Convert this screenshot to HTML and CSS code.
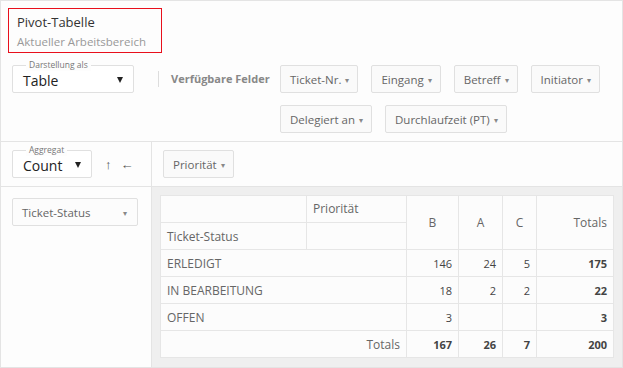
FILE: index.html
```html
<!DOCTYPE html>
<html lang="de">
<head>
    <meta charset="UTF-8">
    <title>Pivot-Tabelle</title>
    <link rel="stylesheet" href="styles.css">
</head>
<body>
    <div class="pivot">
        <div class="head">
            <div class="title-box">
                <div class="title">Pivot-Tabelle</div>
                <div class="subtitle">Aktueller Arbeitsbereich</div>
            </div>
        </div>

        <div class="toolbar">
            <div class="select select-view">
                <span class="select-label">Darstellung als</span>
                <span class="select-value">Table</span>
                <span class="caret-solid"></span>
            </div>
            <span class="sep"></span>
            <span class="fields-label">Verfügbare Felder</span>
            <div class="fields">
                <button class="field">Ticket-Nr. <span class="caret">▾</span></button>
                <button class="field">Eingang <span class="caret">▾</span></button>
                <button class="field">Betreff <span class="caret">▾</span></button>
                <button class="field">Initiator <span class="caret">▾</span></button>
                <button class="field">Delegiert an <span class="caret">▾</span></button>
                <button class="field">Durchlaufzeit (PT) <span class="caret">▾</span></button>
            </div>
        </div>

        <div class="config-row">
            <div class="left-cell agg-cell">
                <div class="select select-agg">
                    <span class="select-label">Aggregat</span>
                    <span class="select-value">Count</span>
                    <span class="caret-solid"></span>
                </div>
                <span class="arrow">↑</span>
                <span class="arrow">←</span>
            </div>
            <div class="right-cell">
                <button class="field">Priorität <span class="caret">▾</span></button>
            </div>
        </div>

        <div class="body-row">
            <div class="left-cell rows-cell">
                <button class="field row-field">Ticket-Status <span class="caret">▾</span></button>
            </div>
            <div class="table-area">
                <table class="pvt">
                    <colgroup>
                        <col style="width:146px">
                        <col style="width:100px">
                        <col style="width:52px">
                        <col style="width:44px">
                        <col style="width:34px">
                        <col style="width:77px">
                    </colgroup>
                    <thead>
                        <tr>
                            <th></th>
                            <th class="axis">Priorität</th>
                            <th rowspan="2" class="col-key">B</th>
                            <th rowspan="2" class="col-key">A</th>
                            <th rowspan="2" class="col-key">C</th>
                            <th rowspan="2" class="num">Totals</th>
                        </tr>
                        <tr>
                            <th class="row-axis">Ticket-Status</th>
                            <th></th>
                        </tr>
                    </thead>
                    <tbody>
                        <tr>
                            <td colspan="2">ERLEDIGT</td>
                            <td class="num">146</td>
                            <td class="num">24</td>
                            <td class="num">5</td>
                            <td class="num total">175</td>
                        </tr>
                        <tr>
                            <td colspan="2">IN BEARBEITUNG</td>
                            <td class="num">18</td>
                            <td class="num">2</td>
                            <td class="num">2</td>
                            <td class="num total">22</td>
                        </tr>
                        <tr>
                            <td colspan="2">OFFEN</td>
                            <td class="num">3</td>
                            <td class="num"></td>
                            <td class="num"></td>
                            <td class="num total">3</td>
                        </tr>
                        <tr>
                            <td colspan="2" class="num">Totals</td>
                            <td class="num total">167</td>
                            <td class="num total">26</td>
                            <td class="num total">7</td>
                            <td class="num total">200</td>
                        </tr>
                    </tbody>
                </table>
            </div>
        </div>
    </div>
</body>
</html>
```

FILE: styles.css
```css
body { margin: 0; font-family: "Open Sans", Arial, sans-serif; background: #fff; }

.pivot {
    width: 623px;
    height: 368px;
    box-sizing: border-box;
    border: 1px solid #e4e4e4;
    background: #fdfdfd;
    display: flex;
    flex-direction: column;
}

.head { padding: 7px 0 0 7px; }
.title-box {
    display: inline-block;
    width: 154px;
    height: 45px;
    box-sizing: border-box;
    border: 1px solid #e8101c;
    padding: 4px 0 0 8px;
}
.title { font-size: 13px; color: #333; line-height: 18px; }
.subtitle { font-size: 11.5px; color: #999; line-height: 18px; margin-top: 2px; }

.toolbar {
    display: flex;
    align-items: flex-start;
    padding: 12px 0 8px 11px;
    border-bottom: 1px solid #e4e4e4;
}

.select {
    position: relative;
    height: 28px;
    box-sizing: border-box;
    border: 1px solid #e0e0e0;
    border-radius: 2px;
    background: #fff;
    display: flex;
    align-items: center;
    padding: 0 10px;
}
.select-view { width: 122px; }
.select-agg { width: 80px; }
.select-label {
    position: absolute;
    top: -7px;
    left: 13px;
    padding: 0 3px;
    background: #fdfdfd;
    font-size: 8.5px;
    line-height: 12px;
    color: #777;
}
.select-value { font-size: 14px; color: #222; flex: 1; padding-top: 3px; }
.caret-solid {
    width: 0;
    height: 0;
    border-left: 3px solid transparent;
    border-right: 3px solid transparent;
    border-top: 6px solid #222;
    margin-top: 2px;
}

.sep {
    width: 1px;
    height: 16px;
    background: #ddd;
    margin: 6px 12px 0 24px;
}
.fields-label {
    width: 109px;
    line-height: 28px;
    font-size: 11px;
    font-weight: bold;
    color: #888;
}
.fields {
    width: 335px;
    display: flex;
    flex-wrap: wrap;
    gap: 12px 13px;
}

.field {
    height: 28px;
    box-sizing: border-box;
    border: 1px solid #e0e0e0;
    border-radius: 2px;
    background: #fafafa;
    padding: 0 8px 0 9px;
    font-family: "Open Sans", Arial, sans-serif;
    font-size: 11.5px;
    color: #666;
    display: inline-flex;
    align-items: center;
}
.caret { font-size: 8px; color: #888; margin-left: 4px; }

.config-row, .body-row {
    display: grid;
    grid-template-columns: 151px 1fr;
}
.config-row { border-bottom: 1px solid #e4e4e4; }
.body-row { flex: 1; }
.left-cell { border-right: 1px solid #e4e4e4; box-sizing: border-box; }
.agg-cell { padding: 8px 0 8px 11px; display: flex; align-items: center; }
.arrow { font-size: 13px; color: #555; margin-left: 13px; }
.arrow + .arrow { margin-left: 9px; }
.right-cell { padding: 8px 11px; }

.rows-cell { padding: 11px 0 0 11px; }
.row-field { width: 126px; justify-content: space-between; padding-left: 9px; padding-right: 10px; background: #fcfcfc; }

.table-area { background: #efefef; padding: 8px; }
.pvt {
    table-layout: fixed;
    width: 453px;
    border-collapse: collapse;
    background: #fcfcfc;
    font-size: 12px;
    color: #666;
}
.pvt th, .pvt td {
    border: 1px solid #e6e6e6;
    height: 26px;
    padding: 0 6px;
    font-weight: normal;
    text-align: left;
    white-space: nowrap;
}
.pvt th.axis { vertical-align: top; padding-top: 4px; height: 22px; }
.pvt th.col-key { text-align: center; }
.pvt .num { text-align: right; }
.pvt td.num { font-size: 11px; color: #444; }
.pvt td[colspan].num { font-size: 12px; color: #666; }
.pvt .total { font-weight: bold; color: #333; }
```
